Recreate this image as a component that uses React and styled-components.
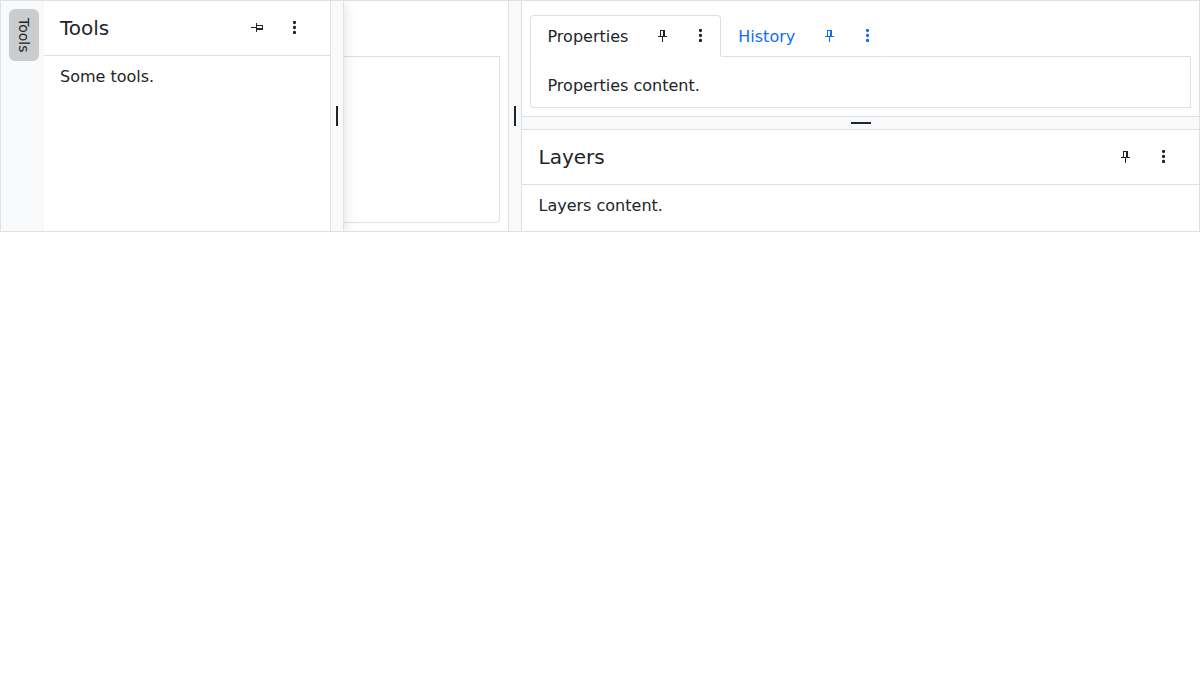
import React from "react";
import styled, { createGlobalStyle, css } from "styled-components";

const line = "#dfe0e2";
const ink = "#212529";
const blue = "#0d6efd";

const GlobalStyle = createGlobalStyle`
  *, *::before, *::after { box-sizing: border-box; }
  body {
    margin: 0;
    background: #fff;
    color: ${ink};
    font: 16px/24px "DejaVu Sans", sans-serif;
  }
`;

const Dock = styled.div`
  display: flex;
  width: 100%;
  height: 232px;
  border: 1px solid ${line};
  overflow: hidden;
`;

const Sidebar = styled.div`
  position: relative;
  z-index: 2;
  flex: 0 0 43px;
  padding: 8px 5px 8px 8px;
  background: #f8f9fa;
`;

const SidebarButton = styled.button`
  display: flex;
  align-items: center;
  justify-content: center;
  width: 30px;
  height: 52px;
  padding: 0 1px 0 0;
  border: 0;
  border-radius: 6px;
  background: #cbccce;
  color: ${ink};
  font: 14px/21px "DejaVu Sans", sans-serif;
  writing-mode: vertical-rl;
`;

const FloatingPane = styled.div`
  position: relative;
  z-index: 1;
  display: flex;
  flex: 0 0 300px;
  background: #fff;
  box-shadow: 0 4px 12px rgba(0, 0, 0, 0.14);
`;

const Panel = styled.section`
  flex: 1;
  min-width: 0;
`;

const PanelHeader = styled.header`
  display: flex;
  align-items: center;
  height: 55px;
  padding: 0 16px;
  border-bottom: 1px solid ${line};
`;

const PanelTitle = styled.h5`
  flex: 1;
  margin: 0;
  padding-left: ${({ $inset = 0 }) => $inset}px;
  font-size: 20px;
  font-weight: 400;
  line-height: 24px;
`;

const PanelBody = styled.div`
  padding: 9px 16px 9px ${({ $inset = 0 }) => 16 + $inset}px;
`;

const IconButton = styled.button`
  display: block;
  flex: none;
  width: 38px;
  height: 38px;
  padding: ${({ $menu }) => ($menu ? "12px 0 13px 17px" : "13px")};
  border: 0;
  background: none;
  color: inherit;
`;

const Splitter = styled.div`
  display: flex;
  align-items: center;
  justify-content: center;
  flex: 0 0 14px;
  border: solid ${line};
  background: #f8f9fa;
  ${({ $vertical }) =>
    $vertical
      ? css`
          border-width: 0 1px;
        `
      : css`
          border-width: 1px 0;
        `}
`;

const Grip = styled.span`
  width: ${({ $vertical }) => ($vertical ? "2px" : "20px")};
  height: ${({ $vertical }) => ($vertical ? "20px" : "2px")};
  background: ${ink};
`;

const CenterPane = styled.div`
  flex: 0 0 164px;
  padding: 55px 8px 8px 0;
`;

const CenterBody = styled.div`
  height: 167px;
  border: 1px solid ${line};
  border-left: 0;
  border-bottom-right-radius: 4px;
`;

const RightColumn = styled.div`
  display: flex;
  flex: 1;
  flex-direction: column;
  min-width: 0;
`;

const TabGroup = styled.div`
  flex: 0 0 115px;
  padding: 14px 8px 8px;
`;

const Tabs = styled.nav`
  display: flex;
  height: 42px;
`;

const Tab = styled.div`
  display: flex;
  align-items: center;
  flex: none;
  padding-left: 16px;
  border: 1px solid transparent;
  border-bottom-color: ${line};
  color: ${blue};
  ${({ $active }) =>
    $active &&
    css`
      border-color: ${line};
      border-bottom-color: #fff;
      border-radius: 4px 4px 0 0;
      color: ${ink};
    `}
`;

const TabLabel = styled.span`
  width: ${({ $width }) => $width}px;
  padding: 2px 0 0 ${({ $inset = 0 }) => $inset}px;
`;

const TabsFill = styled.span`
  flex: 1;
  border-bottom: 1px solid ${line};
`;

const TabBody = styled.div`
  height: 51px;
  padding: 17px 16px 8px 16.5px;
  border: 1px solid ${line};
  border-top: 0;
  border-radius: 0 0 0 4px;
`;

const Glyph = styled.svg`
  display: block;
  fill: currentColor;
  transform: ${({ $sideways }) => ($sideways ? "rotate(90deg)" : "none")};
`;

function Pin({ sideways }) {
  return (
    <Glyph $sideways={sideways} width="12" height="12" viewBox="0 0 12 12" shapeRendering="crispEdges">
      <path d="M3 0h5v6h2v1H6v5H5V7H1V6h2zM4 1v5h2V1z" />
    </Glyph>
  );
}

function Dots() {
  return (
    <Glyph width="3" height="13" viewBox="0 0 3 13">
      <circle cx="1.5" cy="1.5" r="1.65" />
      <circle cx="1.5" cy="6.5" r="1.65" />
      <circle cx="1.5" cy="11.5" r="1.65" />
    </Glyph>
  );
}

function Actions({ sideways }) {
  return (
    <>
      <IconButton aria-label="Pin">
        <Pin sideways={sideways} />
      </IconButton>
      <IconButton $menu aria-label="Menu">
        <Dots />
      </IconButton>
    </>
  );
}

export default function App() {
  return (
    <>
      <GlobalStyle />
      <Dock>
        <Sidebar>
          <SidebarButton>Tools</SidebarButton>
        </Sidebar>
        <FloatingPane>
          <Panel>
            <PanelHeader>
              <PanelTitle>Tools</PanelTitle>
              <Actions sideways />
            </PanelHeader>
            <PanelBody>Some tools.</PanelBody>
          </Panel>
          <Splitter $vertical>
            <Grip $vertical />
          </Splitter>
        </FloatingPane>
        <CenterPane>
          <CenterBody />
        </CenterPane>
        <Splitter $vertical>
          <Grip $vertical />
        </Splitter>
        <RightColumn>
          <TabGroup>
            <Tabs>
              <Tab $active>
                <TabLabel $width={97} $inset={0.5}>Properties</TabLabel>
                <Actions />
              </Tab>
              <Tab>
                <TabLabel $width={73} $inset={0.3}>History</TabLabel>
                <Actions />
              </Tab>
              <TabsFill />
            </Tabs>
            <TabBody>Properties content.</TabBody>
          </TabGroup>
          <Splitter>
            <Grip />
          </Splitter>
          <Panel>
            <PanelHeader>
              <PanelTitle $inset={0.5}>Layers</PanelTitle>
              <Actions />
            </PanelHeader>
            <PanelBody $inset={0.5}>Layers content.</PanelBody>
          </Panel>
        </RightColumn>
      </Dock>
    </>
  );
}
